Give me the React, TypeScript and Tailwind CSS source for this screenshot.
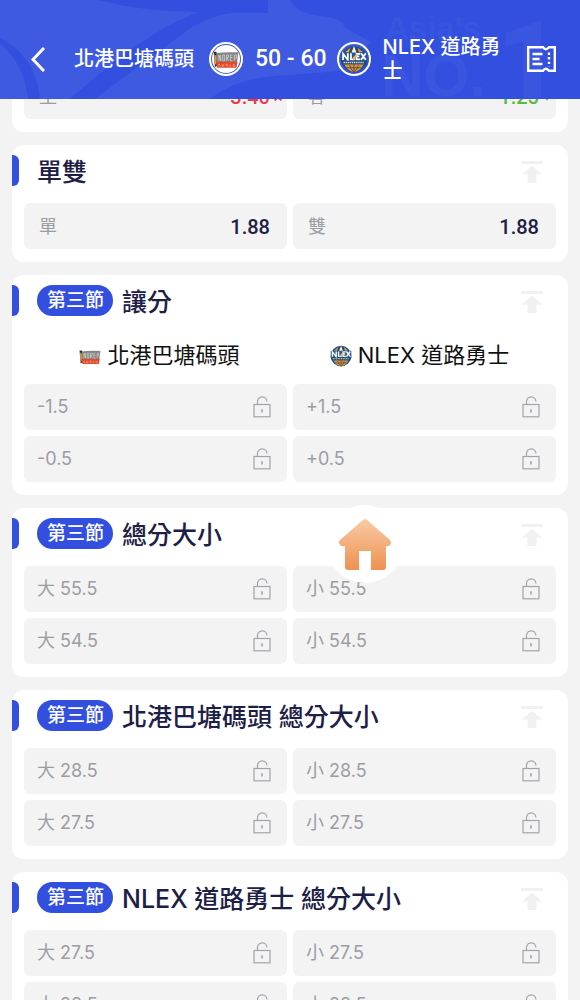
import type { ReactNode } from "react";

type Cell = { label: string; odds?: string; trend?: "up" | "down" };
type Market = { title: string; period?: string; teams?: boolean; rows: [Cell, Cell][] };

const HOME = "北港巴塘碼頭";
const AWAY = "NLEX 道路勇士";

const markets: Market[] = [
  { title: "單雙", rows: [[{ label: "單", odds: "1.88" }, { label: "雙", odds: "1.88" }]] },
  {
    title: "讓分",
    period: "第三節",
    teams: true,
    rows: [
      [{ label: "-1.5" }, { label: "+1.5" }],
      [{ label: "-0.5" }, { label: "+0.5" }],
    ],
  },
  {
    title: "總分大小",
    period: "第三節",
    rows: [
      [{ label: "大 55.5" }, { label: "小 55.5" }],
      [{ label: "大 54.5" }, { label: "小 54.5" }],
    ],
  },
  {
    title: `${HOME} 總分大小`,
    period: "第三節",
    rows: [
      [{ label: "大 28.5" }, { label: "小 28.5" }],
      [{ label: "大 27.5" }, { label: "小 27.5" }],
    ],
  },
  {
    title: `${AWAY} 總分大小`,
    period: "第三節",
    rows: [
      [{ label: "大 27.5" }, { label: "小 27.5" }],
      [{ label: "大 28.5" }, { label: "小 28.5" }],
    ],
  },
];

function LockIcon() {
  return (
    <svg width="18" height="22" viewBox="0 0 18 22" fill="none" stroke="#a3a4ab" strokeWidth="1.2" aria-label="已鎖定">
      <rect x="1" y="8.5" width="16" height="12.3" />
      <path d="M4.500 8.500V5.500a4.700 4.700 0 0 1 9.400 0" />
      <path d="M9 13.200v3.400" strokeWidth="1.6" />
    </svg>
  );
}

function ToTopIcon() {
  return (
    <svg width="22" height="22" viewBox="0 0 22 22" fill="#f1f1f2">
      <path d="M0 0h22v3H0zM11 4.500 21 13.500H15.500V22H6.500v-8.500H1z" />
    </svg>
  );
}

function BatangLogo({ className }: { className: string }) {
  return (
    <svg className={className} viewBox="0 0 40 26">
      <path d="M1 1h4l2 4v17l-4 3z" fill="#35322f" />
      <path d="M2 5l4 3-1 13-3-2z" fill="#d99a3d" />
      <path d="M5 3q15-2 34-1l-2 15q-17-1-32 1z" fill="#858384" />
      <path
        d="M9 15V6l3 9V6M15 6v9h3V6zM21 15V6h3v4h-3l3 5M30 6h-3v9h3M27 10h3M33 15V6h3v5h-3"
        fill="none"
        stroke="#d5d5d5"
        strokeWidth="1.2"
      />
      <path d="M5 16.500h33l-2 9H6z" fill="#e2492d" />
      <path d="M9 24v-4l2 2v2M14 20v4h2v-4M20 24v-4h2v4M26 20v4h2M31 20v4h2v-4" fill="none" stroke="#f6a184" />
    </svg>
  );
}

function NlexLogo({ className }: { className: string }) {
  return (
    <svg className={className} viewBox="0 0 32 32">
      <circle cx="16" cy="16" r="15" fill="#1d5597" />
      <path d="M5 9Q9 3 16 2q7 1 11 7z" fill="#39465a" />
      <path d="M6 8l6-5-2 6zM26 8l-6-5 2 6z" fill="#dda247" />
      <path d="M16 1l3 8h-6z" fill="#f4f4ef" />
      <path d="M5 21h22q-2 8-11 10-9-2-11-10z" fill="#dc9236" />
      <path d="M16 22v9M11 23q1 5 5 8M21 23q-1 5-5 8M7 26h18" fill="none" stroke="#333a45" strokeWidth=".8" />
      <path d="M1 8.500h30v9.500l-3 4H4l-3-4z" fill="#235894" />
      <path
        d="M3.500 17V10l5.500 7v-7.500M12.500 9.500V16.500h4.500M23 10h-4v6.500h4M19 13h3M24 9.500l5.500 7.500M29.500 9.500l-5.500 7.500"
        fill="none"
        stroke="#fff"
        strokeWidth="2"
      />
      <path d="M15 14l5-5-1 5-4 4z" fill="#f0b55a" />
      <path d="M1 18h30l-2 4H3z" fill="#26435f" />
      <path d="M4 20h24" stroke="#dce5ec" strokeWidth="1.800" strokeDasharray="1.6 .8" />
    </svg>
  );
}

function HeaderArt() {
  return (
    <svg className="absolute inset-0 h-full w-full" viewBox="0 0 580 99" preserveAspectRatio="xMinYMin slice" aria-hidden="true">
      <path
        d="M0 0H97Q145 12 200 12Q150 28 70 99H40Q36 56 0 38ZM0 44Q24 62 28 99H0ZM95 99Q160 50 192 27Q215 14 232 13H268V0H290Q298 14 320 16Q342 17 345 28L371 42Q360 50 352 70L290 75Q238 76 210 99Z"
        fill="#3e5ae1"
      />
      <g fill="#3e5ae1" fontFamily="'Liberation Sans', Arial, sans-serif" fontWeight="700">
        <text x="385" y="40" fontSize="33" opacity=".55">Asia's</text>
        <text x="381" y="96" fontSize="59" opacity=".7">NO.</text>
        <text x="497" y="98" fontSize="108" opacity=".7" fontFamily="Roboto, sans-serif" fontWeight="900">1</text>
      </g>
    </svg>
  );
}

function Crest({ children }: { children: ReactNode }) {
  return (
    <span className="flex size-[34px] shrink-0 items-center justify-center rounded-full border-2 border-white p-px">
      {children}
    </span>
  );
}

function OddsCell({ cell }: { cell: Cell }) {
  const up = cell.trend === "up";
  const color = cell.trend ? (up ? "text-[#e5404c]" : "text-[#5cba34]") : "text-[#1c2046]";
  return (
    <button
      type="button"
      className={`flex h-[46px] items-center justify-between rounded-md bg-[#f3f3f3] text-left ${cell.odds ? "pt-0.5 pr-[17px] pl-[15px]" : "pr-4 pl-[13px]"}`}
    >
      <span className="text-lg leading-6 text-[#9c9da3]">{cell.label}</span>
      {cell.odds ? (
        <span className={`flex items-center font-['Roboto','Noto_Sans_CJK_TC',sans-serif] text-xl leading-6 font-medium ${color}`}>
          {cell.odds}
          {cell.trend && (
            <svg className="-mr-3 ml-1" width="8" height="8" viewBox="0 0 8 8" fill="currentColor">
              {up ? <path d="M4 0l4 7-1.5 1L4 5.500 1.500 8 0 7z" /> : <path d="M0 0h8L4 8z" />}
            </svg>
          )}
        </span>
      ) : (
        <LockIcon />
      )}
    </button>
  );
}

function MarketCard({ market }: { market: Market }) {
  return (
    <section className="rounded-xl bg-white pb-[13px]">
      <div className="flex h-[58px] items-start pt-[10px] pr-[25px]">
        <span className="mr-[18px] h-[31px] w-[7px] shrink-0 rounded-r-md bg-[#324fdf]" />
        {market.period && (
          <span className="mr-[9px] flex h-[31px] items-center rounded-full bg-[#324fdf] pt-px pr-[9px] pl-[10px] text-[19px] leading-6 font-medium whitespace-nowrap text-white">
            {market.period}
          </span>
        )}
        <h2 className="mt-px flex-1 text-[25px] leading-8 font-medium text-[#1c2046]">{market.title}</h2>
        <button type="button" aria-label="置頂" className="mt-1.5">
          <ToTopIcon />
        </button>
      </div>
      {market.teams && (
        <div className="grid h-[51px] grid-cols-2 gap-1.5 px-3 pt-1.5 text-[22px] leading-8 text-[#111]">
          <div className="flex items-start justify-center gap-1.5 pl-2">
            <BatangLogo className="mt-2.5 h-4 w-[22px]" />
            {HOME}
          </div>
          <div className="flex items-start justify-center gap-1.5 pr-2.5">
            <NlexLogo className="mt-1.5 size-[22px]" />
            {AWAY}
          </div>
        </div>
      )}
      <div className="grid grid-cols-2 gap-1.5 px-3">
        {market.rows.flat().map((cell) => (
          <OddsCell key={cell.label} cell={cell} />
        ))}
      </div>
    </section>
  );
}

export default function App() {
  return (
    <div
      lang="zh-Hant"
      className="flex h-screen flex-col overflow-hidden bg-[#f3f3f3] font-['Inter','Noto_Sans_CJK_TC',sans-serif]"
    >
      <header className="relative z-10 flex h-[99px] shrink-0 items-end bg-[#324fdf] px-6 pb-[14px] text-white">
        <HeaderArt />
        <div className="relative flex h-[52px] w-full items-center">
          <button type="button" aria-label="返回" className="flex w-[50px] shrink-0 pl-[7px]">
            <svg width="14" height="25" viewBox="0 0 14 25" fill="none" stroke="currentColor" strokeWidth="3">
              <path d="M13 1 2 12.500 13 24" />
            </svg>
          </button>
          <span className="text-xl leading-6 font-medium whitespace-nowrap">{HOME}</span>
          <span className="mr-3 ml-[15px]">
            <Crest>
              <span className="flex size-full items-center justify-center rounded-full bg-white">
                <BatangLogo className="h-[17px] w-[26px]" />
              </span>
            </Crest>
          </span>
          <span className="font-['Roboto',sans-serif] text-[23px] leading-7 font-medium whitespace-nowrap">50 - 60</span>
          <span className="mr-3 ml-2.5">
            <Crest>
              <NlexLogo className="size-[30px]" />
            </Crest>
          </span>
          <span className="min-w-0 flex-1 pr-5 text-xl leading-6 font-medium break-all">{AWAY}</span>
          <button type="button" aria-label="投注單" className="shrink-0">
            <svg width="29" height="26" viewBox="0 0 29 26" fill="none" stroke="currentColor" strokeWidth="2.400">
              <path d="M1.200 1.200H16q2.500 4 6 0h5.800v23.600H22q-3.500-4-6 0H1.200z" />
              <path d="M5.500 8h10M5.500 13h7M5.500 18h10" />
              <path d="M22 6.500v14" strokeDasharray="2.400 2.200" />
            </svg>
          </button>
        </div>
      </header>

      <main className="-mt-[38px] flex min-h-0 flex-1 flex-col gap-[13px] overflow-y-auto px-3 [scrollbar-width:none] *:shrink-0">
        <section className="grid grid-cols-2 gap-1.5 rounded-xl bg-white px-3 pt-3 pb-[13px]">
          <OddsCell cell={{ label: "主", odds: "3.40", trend: "up" }} />
          <OddsCell cell={{ label: "客", odds: "1.25", trend: "down" }} />
        </section>
        {markets.map((market) => (
          <MarketCard key={market.title} market={market} />
        ))}
      </main>

      <button
        type="button"
        aria-label="首頁"
        className="fixed top-[505px] left-[63%] flex size-[78px] -translate-x-1/2 items-center justify-center rounded-full bg-white"
      >
        <svg width="52" height="51" viewBox="0 0 52 51">
          <defs>
            <linearGradient id="house" x1="0" y1="0" x2="0" y2="1">
              <stop offset="0" stopColor="#f7cba6" />
              <stop offset="1" stopColor="#ee9150" />
            </linearGradient>
          </defs>
          <path
            d="M24 1q2-2 4 0l23 20q2 3 0 5-2 2-4 1v21q0 3-3 3H32V32H20v19H9q-3 0-3-3V27q-3 1-5-1-2-3 0-5z"
            fill="url(#house)"
          />
        </svg>
      </button>
    </div>
  );
}
